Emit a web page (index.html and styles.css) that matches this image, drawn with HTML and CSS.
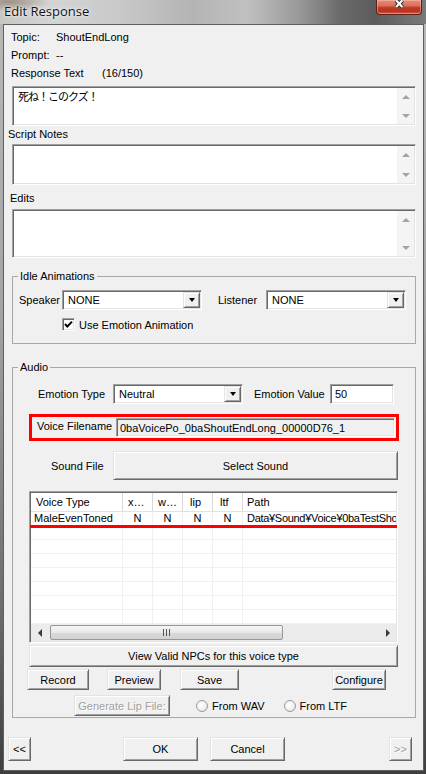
FILE: index.html
```html
<!DOCTYPE html>
<html>
<head>
<meta charset="utf-8">
<title>Edit Response</title>
<link rel="stylesheet" href="styles.css">
</head>
<body>
<div class="window">
  <div class="titlebar">
    <div class="title">Edit Response</div>
    <div class="close">
      <svg width="46" height="15" viewBox="0 0 46 15">
        <path d="M20 0 L26.5 7 M26.5 0 L20 7" stroke="#2e2e2e" stroke-width="4.2" fill="none"/>
        <path d="M20 0 L26.5 7 M26.5 0 L20 7" stroke="#fff" stroke-width="2.2" fill="none"/>
      </svg>
    </div>
  </div>
  <div class="client">
    <div class="info">
      <div class="irow"><span class="ilbl">Topic:</span><span>ShoutEndLong</span></div>
      <div class="irow"><span class="ilbl">Prompt:</span><span>--</span></div>
      <div class="irow"><span class="ilbl wide">Response Text</span><span>(16/150)</span></div>
    </div>

    <div class="memo sunken memo-resp">
      <div class="memo-text">死ね！このクズ！</div>
      <div class="vscroll"><span class="sarr"><i class="tri-up"></i></span><span class="sarr"><i class="tri-down"></i></span></div>
    </div>
    <div class="caption cap-notes">Script Notes</div>
    <div class="memo sunken memo-notes">
      <div class="memo-text"></div>
      <div class="vscroll"><span class="sarr"><i class="tri-up"></i></span><span class="sarr"><i class="tri-down"></i></span></div>
    </div>
    <div class="caption cap-edits">Edits</div>
    <div class="memo sunken memo-edits">
      <div class="memo-text"></div>
      <div class="vscroll"><span class="sarr"><i class="tri-up"></i></span><span class="sarr"><i class="tri-down"></i></span></div>
    </div>

    <fieldset class="group idle">
      <legend>Idle Animations</legend>
      <div class="idle-row">
        <span class="lbl-speaker">Speaker</span>
        <div class="combo sunken combo-140"><span class="combo-val">NONE</span><span class="combo-btn raised"><i class="tri-down dark"></i></span></div>
        <span class="lbl-listener">Listener</span>
        <div class="combo sunken combo-140"><span class="combo-val">NONE</span><span class="combo-btn raised"><i class="tri-down dark"></i></span></div>
      </div>
      <div class="check-row">
        <span class="checkbox sunken"><svg width="9" height="9" viewBox="0 0 9 9"><path d="M1 4 L3.3 6.5 L8 1.6" stroke="#000" stroke-width="1.9" fill="none"/></svg></span>
        <span>Use Emotion Animation</span>
      </div>
    </fieldset>

    <fieldset class="group audio">
      <legend>Audio</legend>
      <div class="emo-row">
        <span class="lbl-emotype">Emotion Type</span>
        <div class="combo sunken combo-130"><span class="combo-val">Neutral</span><span class="combo-btn raised"><i class="tri-down dark"></i></span></div>
        <span class="lbl-emoval">Emotion Value</span>
        <div class="textbox sunken tb-val">50</div>
      </div>
      <div class="redbox">
        <span class="lbl-voice">Voice Filename</span>
        <div class="textbox sunken tb-voice">0baVoicePo_0baShoutEndLong_00000D76_1</div>
      </div>
      <div class="sound-row">
        <span class="lbl-sound">Sound File</span>
        <div class="btn raised btn-select">Select Sound</div>
      </div>
      <div class="lv sunken">
        <div class="lv-head">
          <div class="hc c1">Voice Type</div>
          <div class="hc c2">x…</div>
          <div class="hc c2">w…</div>
          <div class="hc c2 lip">lip</div>
          <div class="hc c2 lip">ltf</div>
          <div class="hc c6">Path</div>
        </div>
        <div class="lv-row">
          <div class="rc c1 first">MaleEvenToned</div>
          <div class="rc c2 ctr">N</div>
          <div class="rc c2 ctr">N</div>
          <div class="rc c2 ctr">N</div>
          <div class="rc c2 ctr">N</div>
          <div class="rc c6 path">Data¥Sound¥Voice¥0baTestSho</div>
        </div>
        <div class="lv-row"><div class="rc c1"></div><div class="rc c2"></div><div class="rc c2"></div><div class="rc c2"></div><div class="rc c2"></div><div class="rc c6"></div></div>
        <div class="lv-row"><div class="rc c1"></div><div class="rc c2"></div><div class="rc c2"></div><div class="rc c2"></div><div class="rc c2"></div><div class="rc c6"></div></div>
        <div class="lv-row"><div class="rc c1"></div><div class="rc c2"></div><div class="rc c2"></div><div class="rc c2"></div><div class="rc c2"></div><div class="rc c6"></div></div>
        <div class="lv-row"><div class="rc c1"></div><div class="rc c2"></div><div class="rc c2"></div><div class="rc c2"></div><div class="rc c2"></div><div class="rc c6"></div></div>
        <div class="lv-row"><div class="rc c1"></div><div class="rc c2"></div><div class="rc c2"></div><div class="rc c2"></div><div class="rc c2"></div><div class="rc c6"></div></div>
        <div class="lv-row"><div class="rc c1"></div><div class="rc c2"></div><div class="rc c2"></div><div class="rc c2"></div><div class="rc c2"></div><div class="rc c6"></div></div>
        <div class="lv-row"><div class="rc c1"></div><div class="rc c2"></div><div class="rc c2"></div><div class="rc c2"></div><div class="rc c2"></div><div class="rc c6"></div></div>
        <div class="hscroll">
          <span class="harr"><i class="tri-left"></i></span>
          <div class="htrack">
            <div class="hthumb"><svg width="7" height="7" viewBox="0 0 7 7"><path d="M0.5 0 V7 M3.5 0 V7 M6.5 0 V7" stroke="#555" stroke-width="1"/></svg></div>
          </div>
          <span class="harr"><i class="tri-right"></i></span>
        </div>
        <div class="redline"></div>
      </div>
      <div class="btn raised btn-npc">View Valid NPCs for this voice type</div>
      <div class="btn-row">
        <div class="btn raised b-record">Record</div>
        <div class="btn raised b-preview">Preview</div>
        <div class="btn raised b-save">Save</div>
        <div class="btn raised b-config">Configure</div>
      </div>
      <div class="gen-row">
        <div class="btn raised disabled b-gen">Generate Lip File:</div>
        <span class="radio r-wav"></span><span class="rlbl">From WAV</span>
        <span class="radio r-ltf"></span><span class="rlbl">From LTF</span>
      </div>
    </fieldset>

    <div class="navrow">
      <div class="btn raised n-prev">&lt;&lt;</div>
      <div class="btn raised n-ok">OK</div>
      <div class="btn raised n-cancel">Cancel</div>
      <div class="btn raised disabled n-next">&gt;&gt;</div>
    </div>
  </div>
</div>
</body>
</html>
```

FILE: styles.css
```css
* { box-sizing: border-box; }
html, body { margin: 0; padding: 0; }
body {
  width: 426px;
  height: 774px;
  overflow: hidden;
  background: #4a4a4a;
  font-family: "Liberation Sans", "Noto Sans CJK JP", sans-serif;
  font-size: 11px;
  color: #000;
}
.window {
  width: 426px;
  height: 774px;
  display: flex;
  flex-direction: column;
  background: linear-gradient(180deg, #b9b9b9 0%, #a4a4a4 40%, #6a6a6a 80%, #3e3e3e 100%);
}
.titlebar {
  height: 24px;
  flex: none;
  display: flex;
  justify-content: space-between;
  align-items: flex-start;
  background:
    radial-gradient(ellipse 40px 10px at 10px 2px, rgba(120,100,80,.55), transparent),
    linear-gradient(90deg, #c8c6c3 0%, #d4d4d4 12%, #c9c9c9 28%, #b4b4b4 45%, #c0c0c0 58%, #9a9a9a 70%, #6a6a6a 80%, #5c5c5c 88%, #7a7a7a 100%);
}
.title {
  font-family: "Open Sans", "Liberation Sans", sans-serif;
  font-size: 13px;
  line-height: 18px;
  margin: 2px 0 0 4px;
  color: #111;
  text-shadow: 0 0 5px rgba(255,255,255,.9), 0 0 2px rgba(255,255,255,.9);
}
.close {
  width: 46px;
  height: 15px;
  margin-right: 4px;
  border: 1px solid #5e2216;
  border-top: none;
  border-radius: 0 0 4px 4px;
  background: linear-gradient(180deg, #e48f7c 0%, #d9705a 40%, #c23a22 55%, #b83220 80%, #d0604a 100%);
  box-shadow: inset 0 0 0 1px rgba(255,200,190,.45);
  display: flex;
}
.close svg { display: block; }

.client {
  margin-left: 3px;
  width: 421px;
  height: 747px;
  flex: none;
  border: 1px solid #5f5f5f;
  background: #f0f0f0;
}

/* common bevels */
.sunken {
  border: 1px solid;
  border-color: #a0a0a0 #fff #fff #a0a0a0;
  padding: 1px;
  box-shadow: inset 1px 1px 0 #696969, inset -1px -1px 0 #e3e3e3;
  background: #fff;
}
.raised {
  border: 1px solid;
  border-color: #e3e3e3 #696969 #696969 #e3e3e3;
  padding: 1px;
  box-shadow: inset 1px 1px 0 #fff, inset -1px -1px 0 #a0a0a0;
  background: #f0f0f0;
}

/* top info */
.info { padding: 3px 0 0 7px; }
.irow { display: flex; height: 18px; align-items: center; }
.ilbl { width: 45px; }
.ilbl.wide { width: 91px; }

.memo { margin-left: 8px; width: 404px; display: flex; }
.memo-resp { margin-top: 4px; height: 40px; }
.memo-notes { margin-top: 2px; height: 41px; }
.memo-edits { margin-top: 3px; height: 49px; }
.memo-text {
  flex: 1;
  padding: 1px 4px;
  line-height: 14px;
  font-family: "Noto Sans CJK JP", sans-serif;
  font-size: 11px;
  letter-spacing: -1px;
}
.vscroll {
  width: 17px;
  background: #f4f4f4;
  display: flex;
  flex-direction: column;
  justify-content: space-between;
}
.sarr { height: 17px; display: flex; align-items: center; justify-content: center; }
.tri-up { width: 0; height: 0; border-left: 4px solid transparent; border-right: 4px solid transparent; border-bottom: 4px solid #a3a3a3; }
.tri-down { width: 0; height: 0; border-left: 4px solid transparent; border-right: 4px solid transparent; border-top: 4px solid #a3a3a3; }
.tri-down.dark { border-left-width: 3.5px; border-right-width: 3.5px; border-top-color: #000; }
.tri-left { width: 0; height: 0; border-top: 4px solid transparent; border-bottom: 4px solid transparent; border-right: 4px solid #3a3a3a; }
.tri-right { width: 0; height: 0; border-top: 4px solid transparent; border-bottom: 4px solid transparent; border-left: 4px solid #3a3a3a; }

.caption { line-height: 16px; height: 16px; }
.cap-notes { margin-left: 4px; }
.cap-edits { margin-left: 6px; margin-top: 5px; }

/* group boxes */
.group {
  margin: 0 0 0 8px;
  width: 404px;
  padding: 0;
  border: 1px solid #a8a8a8;
  min-width: 0;
}
.group legend {
  padding: 0 2px;
  margin-left: 5px;
  line-height: 18px;
  height: 18px;
}
.idle { margin-top: 9px; padding-bottom: 12px; }
.audio { margin-top: 14px; padding-bottom: 1px; }

.idle-row { display: flex; align-items: center; height: 20px; margin-top: 5px; }
.lbl-speaker { margin-left: 6px; width: 43px; }
.lbl-listener { margin-left: 16px; width: 48px; }
.combo { height: 20px; display: flex; align-items: stretch; }
.combo-140 { width: 140px; }
.combo-130 { width: 130px; }
.combo-val { flex: 1; padding-left: 4px; display: flex; align-items: center; }
.combo-btn { width: 17px; display: flex; align-items: center; justify-content: center; }

.check-row { display: flex; align-items: center; height: 13px; margin-top: 8px; margin-left: 49px; }
.checkbox { width: 13px; height: 13px; margin-right: 4px; display: flex; align-items: center; justify-content: center; }
.checkbox svg { display: block; }

.emo-row { display: flex; align-items: center; height: 20px; margin-top: 8px; }
.lbl-emotype { margin-left: 25px; width: 75px; }
.lbl-emoval { margin-left: 11px; width: 76px; }
.textbox { height: 20px; display: flex; align-items: center; padding-left: 4px; }
.tb-val { width: 64px; }

.redbox {
  margin: 10px 0 0 16px;
  width: 370px;
  height: 27px;
  border: 3px solid #f00;
  display: flex;
  align-items: center;
  padding-left: 5px;
}
.lbl-voice { width: 79px; margin-top: -3px; }
.tb-voice { width: 279px; height: 19px; background: #f0f0f0; padding-left: 3px; }

.sound-row { display: flex; align-items: center; height: 29px; margin-top: 10px; }
.lbl-sound { margin-left: 38px; width: 62px; }
.btn { display: flex; align-items: center; justify-content: center; white-space: nowrap; }
.btn-select { width: 285px; height: 29px; }

/* list view */
.lv {
  position: relative;
  margin: 11px 0 0 16px;
  width: 369px;
  height: 152px;
  overflow: hidden;
  display: flex;
  flex-direction: column;
}
.lv-head { display: flex; height: 19px; border-bottom: 1px solid #e2e2e2; flex: none; }
.hc { height: 18px; display: flex; align-items: center; padding-left: 5px; border-right: 1px solid #d8d8d8; white-space: nowrap; }
.hc.lip { padding-left: 7px; }
.c1 { width: 92px; flex: none; }
.c2 { width: 30px; flex: none; }
.c6 { flex: 1; border-right: none; min-width: 0; overflow: hidden; }
.hc.c6 { padding-left: 4px; }
.lv-row { display: flex; height: 14px; border-bottom: 1px solid #f0f0f0; flex: none; }
.rc { height: 13px; border-right: 1px solid #f0f0f0; line-height: 13px; white-space: nowrap; overflow: hidden; }
.rc.first { padding-left: 3px; }
.rc.ctr { text-align: center; }
.rc.c6 { padding-left: 4px; border-right: none; }
.rc.path { letter-spacing: -0.3px; }
.redline {
  position: absolute;
  left: -1px;
  right: -1px;
  top: 33px;
  height: 3px;
  background: #f00;
}
.hscroll { height: 17px; display: flex; flex: none; background: #ebebeb; }
.harr { width: 17px; display: flex; align-items: center; justify-content: center; }
.htrack { flex: 1; display: flex; align-items: stretch; padding: 1px 0; }
.hthumb {
  margin-left: 2px;
  width: 233px;
  border: 1px solid #979797;
  border-radius: 2px;
  background: linear-gradient(180deg, #f5f5f5 0%, #e8e8e8 50%, #d9d9d9 51%, #d2d2d2 100%);
  display: flex;
  align-items: center;
  justify-content: center;
}
.hthumb svg { display: block; }

.btn-npc { margin: 2px 0 0 16px; width: 369px; height: 22px; }
.btn-row { display: flex; height: 21px; margin-top: 2px; }
.btn-row .btn { height: 21px; }
.b-record { margin-left: 14px; width: 62px; }
.b-preview { margin-left: 18px; width: 54px; }
.b-save { margin-left: 19px; width: 59px; }
.b-config { margin-left: 93px; width: 54px; }

.gen-row { display: flex; align-items: center; height: 21px; margin-top: 5px; }
.b-gen { margin-left: 61px; width: 96px; height: 21px; }
.disabled { color: #a0a0a0; text-shadow: 1px 1px 0 #fff; }
.radio {
  width: 12px;
  height: 12px;
  border-radius: 50%;
  border: 1px solid #9a9a9a;
  background: radial-gradient(circle at 40% 40%, #fff 0%, #f2f2f2 50%, #dcdcdc 100%);
}
.r-wav { margin-left: 26px; }
.r-ltf { margin-left: 19px; }
.rlbl { margin-left: 4px; }

.navrow { display: flex; height: 24px; margin-top: 19px; }
.navrow .btn { height: 24px; }
.n-prev { margin-left: 4px; width: 23px; }
.n-ok { margin-left: 92px; width: 75px; }
.n-cancel { margin-left: 12px; width: 75px; }
.n-next { margin-left: 104px; width: 23px; }
```
